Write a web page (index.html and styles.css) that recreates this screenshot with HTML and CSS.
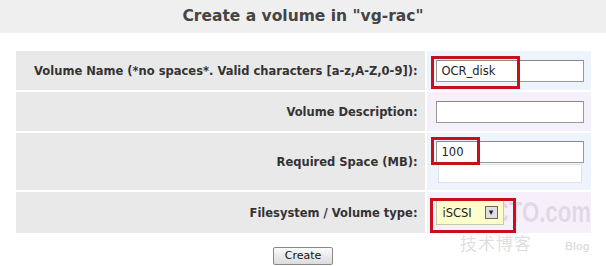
FILE: index.html
```html
<!DOCTYPE html>
<html lang="en">
<head>
    <meta charset="UTF-8">
    <title>Create a volume</title>
    <link rel="stylesheet" href="styles.css">
</head>
<body>
    <div class="header">
        <h1>Create a volume in "vg-rac"</h1>
    </div>

    <form class="volume-form">
        <table class="form-table">
            <colgroup>
                <col class="col-label">
                <col class="col-field">
            </colgroup>
            <tr class="row">
                <td class="label">Volume Name (*no spaces*. Valid characters [a-z,A-Z,0-9]):</td>
                <td class="field blue">
                    <span class="marked">
                        <input type="text" class="text-input" value="OCR_disk">
                        <span class="mark mark-name"></span>
                    </span>
                </td>
            </tr>
            <tr class="row">
                <td class="label">Volume Description:</td>
                <td class="field lilac">
                    <input type="text" class="text-input" value="">
                </td>
            </tr>
            <tr class="row row-tall">
                <td class="label">Required Space (MB):</td>
                <td class="field blue">
                    <span class="marked">
                        <input type="text" class="text-input" value="100">
                        <span class="mark mark-size"></span>
                    </span>
                    <div class="hint-box"></div>
                </td>
            </tr>
            <tr class="row row-type">
                <td class="label">Filesystem / Volume type:</td>
                <td class="field lilac">
                    <div class="watermark">51CTO.com</div>
                    <span class="marked">
                        <span class="select">iSCSI<span class="select-btn">&#9662;</span></span>
                        <span class="mark mark-type"></span>
                    </span>
                </td>
            </tr>
        </table>
        <div class="actions">
            <button type="button" class="create-button">Create</button>
            <div class="watermark-sub">
                <span class="wm-cn">技术博客</span>
                <span class="wm-blog">Blog</span>
            </div>
        </div>
    </form>
</body>
</html>
```

FILE: styles.css
```css
body {
    margin: 0;
    font-family: Verdana, "DejaVu Sans", sans-serif;
    background: #fff;
    color: #333;
    overflow: hidden;
}
.header {
    background: #efefef;
    height: 33px;
    text-align: center;
}
.header h1 {
    margin: 0;
    font-size: 15.5px;
    line-height: 33px;
    color: #444;
}
.volume-form {
    margin-top: 16px;
}
.form-table {
    width: 579px;
    margin: 0 auto;
    border-spacing: 2px;
    table-layout: fixed;
}
.col-label {
    width: 409px;
}
.col-field {
    width: 164px;
}
.form-table td {
    padding: 0;
}
.row {
    height: 39px;
}
.row-tall {
    height: 57px;
}
.row-type {
    height: 41px;
}
.label {
    background: #e9e9e9;
    text-align: right;
    font-weight: bold;
    font-size: 11.5px;
    white-space: nowrap;
    padding-right: 7px !important;
}
.field {
    padding-left: 9px !important;
    vertical-align: middle;
}
.field.blue {
    background: #eef4fb;
}
.field.lilac {
    background: #f6f0fa;
    position: relative;
    overflow: hidden;
}
.marked {
    position: relative;
    display: inline-block;
    vertical-align: middle;
}
.text-input {
    width: 148px;
    height: 22px;
    box-sizing: border-box;
    border: 1px solid #999;
    border-top-color: #888;
    padding: 0 5px;
    font-family: Verdana, "DejaVu Sans", sans-serif;
    font-size: 11.5px;
    color: #222;
    background: #fff;
    display: block;
}
.hint-box {
    width: 144px;
    height: 19px;
    margin: 1px 0 0 2px;
    border: 1px solid #dde2e8;
    background: #fff;
    box-sizing: border-box;
}
.mark {
    position: absolute;
    border: 3px solid #c8101c;
    pointer-events: none;
}
.mark-name {
    left: -5px;
    top: -4px;
    width: 83px;
    height: 27px;
}
.mark-size {
    left: -5px;
    top: -4px;
    width: 43px;
    height: 22px;
}
.mark-type {
    left: -6px;
    top: -2px;
    width: 80px;
    height: 29px;
}
.select {
    display: flex;
    align-items: center;
    justify-content: space-between;
    width: 68px;
    height: 25px;
    padding: 0 5px 0 6px;
    background: #ffffcc;
    border: 1px solid #c8c8b0;
    font-size: 11.5px;
    color: #222;
    box-sizing: border-box;
}
.select-btn {
    width: 11px;
    height: 11px;
    border: 1px solid #666;
    background: #e0e0e0;
    font-size: 9px;
    line-height: 11px;
    text-align: center;
    color: #222;
}
.watermark {
    position: absolute;
    left: 41px;
    top: 3px;
    font-family: "Liberation Sans", sans-serif;
    font-weight: bold;
    font-size: 30px;
    line-height: 34px;
    white-space: nowrap;
    color: rgba(150, 130, 175, 0.22);
    transform: scaleX(0.74);
    transform-origin: left top;
    pointer-events: none;
}
.actions {
    position: relative;
    text-align: center;
    margin-top: 9px;
}
.create-button {
    width: 60px;
    height: 18px;
    padding: 0;
    font-family: Tahoma, "DejaVu Sans", sans-serif;
    font-size: 11px;
    color: #111;
    background: linear-gradient(#fafafa, #dcdcdc);
    border: 1px solid #888;
    border-radius: 2px;
}
.watermark-sub {
    position: absolute;
    left: 460px;
    top: -14px;
    white-space: nowrap;
    pointer-events: none;
    color: rgba(160, 160, 160, 0.35);
}
.wm-cn {
    font-family: "Noto Sans CJK SC", sans-serif;
    font-size: 17px;
    letter-spacing: 1px;
}
.wm-blog {
    font-family: "Liberation Sans", sans-serif;
    font-size: 11px;
    font-weight: bold;
    margin-left: 28px;
}
```
